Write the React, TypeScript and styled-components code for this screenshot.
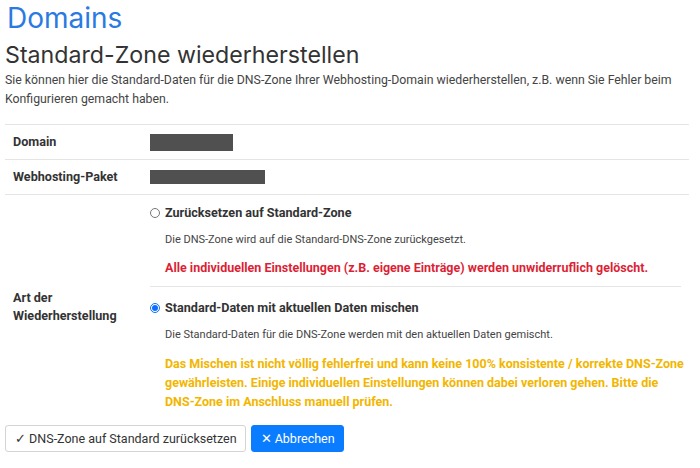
import React, { useState } from 'react';
import styled, { createGlobalStyle } from 'styled-components';

const GlobalStyle = createGlobalStyle`
  body {
    margin: 0;
    background: #ffffff;
    font-family: Roboto, "Noto Sans", sans-serif;
    color: #333333;
  }
`;

const Page = styled.div`
  padding: 0 5px;
`;

const Title = styled.h1`
  margin: 2px 0 0 2px;
  font-family: Inter, "Noto Sans", sans-serif;
  font-size: 28px;
  font-weight: 400;
  line-height: 32px;
  color: #2a7ae2;
`;

const Subtitle = styled.h2`
  margin: 6px 0 0 0;
  font-family: Inter, "Noto Sans", sans-serif;
  font-size: 23.2px;
  font-weight: 400;
  line-height: 30px;
  color: #333333;
`;

const Intro = styled.p`
  margin: 1px 0 15px 0;
  font-size: 12.3px;
  line-height: 19px;
  color: #444444;
`;

const Table = styled.table`
  width: 684px;
  border-collapse: collapse;
  font-size: 12.6px;
`;

const Row = styled.tr<{ $last?: boolean }>`
  border-top: 1px solid #e4e4e4;
  border-bottom: ${p => (p.$last ? 'none' : '1px solid #e4e4e4')};
`;

const Label = styled.th`
  width: 121px;
  padding: 8px;
  text-align: left;
  vertical-align: middle;
  font-weight: 700;
  line-height: 18px;
  color: #333333;
`;

const Value = styled.td`
  padding: 8px;
  vertical-align: middle;
`;

const Masked = styled.div<{ $w: number; $h: number; $blur?: boolean }>`
  width: ${p => p.$w}px;
  height: ${p => p.$h}px;
  background: #505050;
  filter: ${p => (p.$blur ? 'blur(0.7px)' : 'none')};
`;

const Option = styled.div<{ $last?: boolean }>`
  padding: 0 0 ${p => (p.$last ? 0 : 9)}px 0;
  border-bottom: ${p => (p.$last ? 'none' : '1px solid #e4e4e4')};
  & + & {
    padding-top: 11px;
  }
`;

const RadioLine = styled.label`
  display: flex;
  align-items: center;
  gap: 5px;
  font-weight: 700;
  line-height: 20px;
  cursor: pointer;
`;

const Radio = styled.input`
  margin: 0;
  width: 10px;
  height: 10px;
  accent-color: #0d6efd;
`;

const Hint = styled.p`
  margin: 8px 0 0 15px;
  font-size: 11px;
  line-height: 18px;
  color: #444444;
`;

const Warning = styled.p<{ $tone: 'danger' | 'warning' }>`
  margin: ${p => (p.$tone === 'danger' ? 9 : 10)}px -8px 0 15px;
  font-size: 12.5px;
  font-weight: 700;
  line-height: 19px;
  color: ${p => (p.$tone === 'danger' ? '#dc1f36' : '#f2b600')};
`;

const Actions = styled.div`
  display: flex;
  gap: 5px;
  margin-top: 6px;
`;

const Button = styled.button<{ $primary?: boolean }>`
  display: inline-flex;
  align-items: center;
  gap: 4px;
  height: 27px;
  padding: 0 8px 0 9px;
  font-family: Roboto, "Noto Sans", sans-serif;
  font-size: 12.5px;
  border-radius: 3px;
  border: 1px solid ${p => (p.$primary ? '#0a7cff' : '#d4d4d4')};
  background: ${p => (p.$primary ? '#0a7cff' : '#ffffff')};
  color: ${p => (p.$primary ? '#ffffff' : '#333333')};
  cursor: pointer;
`;

const App: React.FC = () => {
  const [mode, setMode] = useState<'reset' | 'merge'>('merge');

  return (
    <Page>
      <GlobalStyle />
      <Title>Domains</Title>
      <Subtitle>Standard-Zone wiederherstellen</Subtitle>
      <Intro>
        Sie können hier die Standard-Daten für die DNS-Zone Ihrer Webhosting-Domain wiederherstellen, z.B. wenn Sie Fehler beim
        Konfigurieren gemacht haben.
      </Intro>
      <Table>
        <tbody>
          <Row>
            <Label>Domain</Label>
            <Value><Masked $w={83} $h={17} $blur /></Value>
          </Row>
          <Row>
            <Label>Webhosting-Paket</Label>
            <Value><Masked $w={115} $h={14} /></Value>
          </Row>
          <Row $last>
            <Label>Art der Wiederherstellung</Label>
            <Value>
              <Option>
                <RadioLine>
                  <Radio type="radio" name="mode" checked={mode === 'reset'} onChange={() => setMode('reset')} />
                  Zurücksetzen auf Standard-Zone
                </RadioLine>
                <Hint>Die DNS-Zone wird auf die Standard-DNS-Zone zurückgesetzt.</Hint>
                <Warning $tone="danger">
                  Alle individuellen Einstellungen (z.B. eigene Einträge) werden unwiderruflich gelöscht.
                </Warning>
              </Option>
              <Option $last>
                <RadioLine>
                  <Radio type="radio" name="mode" checked={mode === 'merge'} onChange={() => setMode('merge')} />
                  Standard-Daten mit aktuellen Daten mischen
                </RadioLine>
                <Hint>Die Standard-Daten für die DNS-Zone werden mit den aktuellen Daten gemischt.</Hint>
                <Warning $tone="warning">
                  Das Mischen ist nicht völlig fehlerfrei und kann keine 100% konsistente / korrekte DNS-Zone
                  gewährleisten. Einige individuellen Einstellungen können dabei verloren gehen. Bitte die
                  DNS-Zone im Anschluss manuell prüfen.
                </Warning>
              </Option>
            </Value>
          </Row>
        </tbody>
      </Table>
      <Actions>
        <Button>✓ DNS-Zone auf Standard zurücksetzen</Button>
        <Button $primary>✕ Abbrechen</Button>
      </Actions>
    </Page>
  );
};

export default App;
